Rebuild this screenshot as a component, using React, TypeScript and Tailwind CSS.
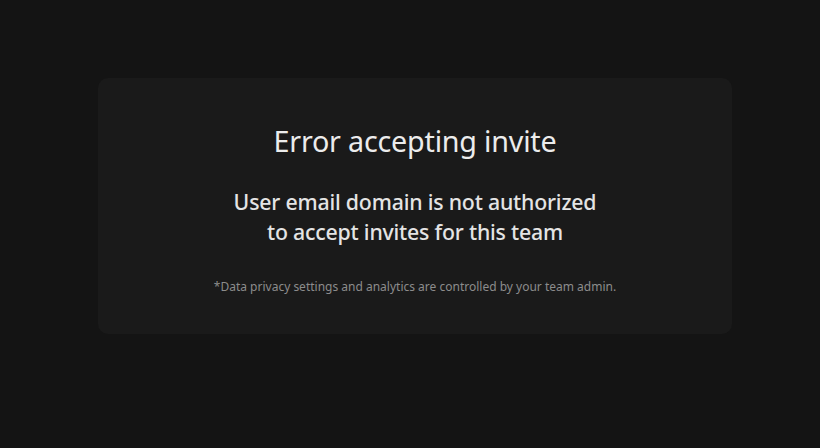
export default function App() {
  return (
    <div
      className="min-h-[448px] w-full bg-[#141414] pl-[10px] pt-[78px] flex justify-center items-start"
      style={{ fontFamily: '"Noto Sans", "Open Sans", sans-serif' }}
    >
      <div className="w-[634px] h-[256px] rounded-[10px] bg-[#1a1a1a] flex flex-col items-center pt-[43px]">
        <h1 className="text-[28.7px] leading-[40px] text-[#ececec] tracking-[-0.2px]">
          Error accepting invite
        </h1>
        <p className="mt-[26px] text-[21.3px] leading-[30px] font-medium text-[#e4e4e4] text-center tracking-[-0.2px]">
          User email domain is not authorized
          <br />
          to accept invites for this team
        </p>
        <p className="mt-[31px] text-[12px] leading-[18px] text-[#8c8c8c]">
          *Data privacy settings and analytics are controlled by your team admin.
        </p>
      </div>
    </div>
  );
}
